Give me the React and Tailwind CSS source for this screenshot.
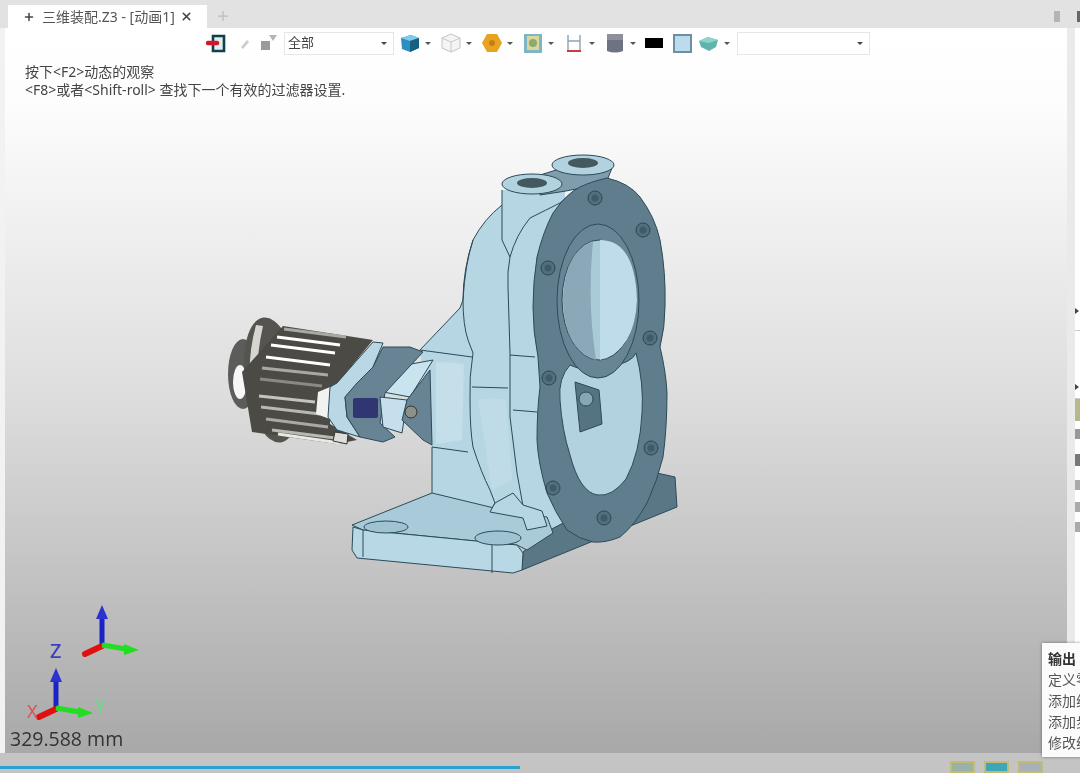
import { Plus, X } from "lucide-react";

const cjk = "font-['Noto_Sans','Noto_Sans_CJK_SC',sans-serif]";

function Caret({ last }) {
  return (
    <span
      className={`ml-[4px] h-0 w-0 border-x-[3px] border-t-[3px] border-x-transparent border-t-[#555] ${last ? "mr-[7px]" : "mr-[9px]"}`}
    />
  );
}

function Combo({ label, width }) {
  return (
    <div className={`${width} flex h-[23px] items-center justify-between border border-[#e6e6e6] bg-white pl-[3px] pr-[6px] text-[13px] text-[#444]`}>
      <span>{label}</span>
      <span className="h-0 w-0 border-x-[3px] border-t-[3px] border-x-transparent border-t-[#444]" />
    </div>
  );
}

function Icon({ children, w = 22 }) {
  return (
    <svg width={w} height="22" viewBox="0 0 22 22" className="shrink-0">
      {children}
    </svg>
  );
}

function Toolbar() {
  return (
    <div className="flex h-[30px] items-center pl-[201px]">
      <Icon>
        <path d="M7 4h11v15H7z" fill="#dfeef0" stroke="#123f4c" strokeWidth="2.6" />
        <path d="M2 11h9" stroke="#d8142a" strokeWidth="4.5" strokeLinecap="round" />
      </Icon>
      <span className="w-[5px]" />
      <Icon>
        <path d="M8 15l6-7 2 2-6 7z" fill="#ccc" />
      </Icon>
      <span className="w-[2px]" />
      <Icon>
        <rect x="4" y="9" width="9" height="9" fill="#9a9a9a" />
        <path d="M12 3h8l-4 6z" fill="#b5b5b5" />
      </Icon>
      <span className="w-[5px]" />
      <Combo label="全部" width="w-[110px]" />
      <span className="w-[5px]" />
      <Icon>
        <path d="M2 6l10-3 8 3v10l-9 4-8-3z" fill="#2b8fc0" />
        <path d="M2 6l9 3 9-3-8-3z" fill="#7ecbea" />
        <path d="M11 9v11l9-4V6z" fill="#17607f" />
      </Icon>
      <Caret />
      <Icon>
        <path d="M2 6l9-4 9 4v10l-9 4-9-4z" fill="#f4f4f4" stroke="#c4c4c4" />
        <path d="M2 6l9 4 9-4M11 10v10" fill="none" stroke="#c8c8c8" />
      </Icon>
      <Caret />
      <Icon>
        <path d="M6 2h10l5 9-5 9H6l-5-9z" fill="#e8a320" />
        <circle cx="11" cy="11" r="3" fill="#c77d12" />
      </Icon>
      <Caret />
      <Icon>
        <rect x="2" y="2" width="18" height="19" fill="#7fb6c4" />
        <rect x="5" y="4" width="12" height="14" fill="#d9d6a0" />
        <circle cx="11" cy="11" r="4" fill="#8cab6a" />
      </Icon>
      <Caret />
      <Icon>
        <path d="M5 3v15M17 3v15M5 9h12" fill="none" stroke="#8aa4b4" strokeWidth="1.4" />
        <path d="M4 19h14" stroke="#c83a4a" strokeWidth="2" />
      </Icon>
      <Caret />
      <Icon>
        <path d="M3 2h16v17q-8 3-16 0z" fill="#6d7382" />
        <path d="M3 2h16v6H3z" fill="#8d909a" />
      </Icon>
      <Caret />
      <span className="h-[10px] w-[18px] bg-black" />
      <span className="w-[10px]" />
      <span className="h-[19px] w-[19px] border-2 border-[#6f8fa0] bg-[#bcdcee]" />
      <span className="w-[6px]" />
      <Icon>
        <path d="M1 9l9-4 10 3-2 7-7 4-8-4z" fill="#5fb5ac" />
        <path d="M1 9l9-4 10 3-9 3z" fill="#8ed4cc" />
      </Icon>
      <Caret last />
      <Combo label="" width="w-[133px]" />
    </div>
  );
}

function Bolt({ cx, cy }) {
  return (
    <g>
      <circle cx={cx} cy={cy} r="7" fill="#51707f" stroke="#2c4652" strokeWidth="1" />
      <circle cx={cx} cy={cy} r="3.5" fill="#3f5a68" />
    </g>
  );
}

const ink = "#2c4a58";
const teeth = [
  [284, 329, 346, 337, "#a9a9a4"],
  [277, 337, 340, 345, "#ffffff"],
  [271, 345, 335, 353, "#ffffff"],
  [266, 357, 330, 365, "#ffffff"],
  [262, 368, 328, 375, "#a9a9a4"],
  [260, 379, 322, 386, "#8a8a85"],
  [259, 396, 315, 402, "#c4c4be"],
  [261, 407, 320, 414, "#b9b9b3"],
  [266, 419, 328, 427, "#a9a9a4"],
  [272, 430, 335, 438, "#b9b9b3"],
  [278, 434, 340, 443, "#e8e8e4"],
];
const bolts = [
  [595, 198],
  [643, 230],
  [548, 268],
  [650, 338],
  [549, 378],
  [651, 448],
  [553, 488],
  [604, 518],
];

function Model() {
  return (
    <svg width="500" height="460" viewBox="200 130 500 460" className="absolute left-[195px] top-[102px]">
      {/* nut */}
      <ellipse cx="243" cy="374" rx="15" ry="35" fill="#5c5c5a" />
      <ellipse cx="240" cy="382" rx="7" ry="17" fill="#f7f7f7" />
      {/* pulley disc */}
      <ellipse cx="272" cy="380" rx="27" ry="63" transform="rotate(-8 272 380)" fill="#55544f" />
      <path d="M256 325q-15 55 5 110l5 3q-16-55-3-112z" fill="#d5d5d2" />
      {/* gear */}
      <path d="M283 326l90 14-36 44-7 4v36l27 16-20 4-85-12-10-60z" fill="#4b4a45" />
      {teeth.map(([x1, y1, x2, y2, c], i) => (
        <line key={i} x1={x1} y1={y1} x2={x2} y2={y2} stroke={c} strokeWidth="3" />
      ))}
      <path d="M318 392l12-5v32l-14-5z" fill="#f2f2f0" />
      <path d="M335 432l13 2-1 10-14-3z" fill="#ddd" stroke="#333" strokeWidth="1" />
      {/* housing */}
      <path
        d="M502 190L565 190L565 530L490 512L432 493V447L420 350L460 308L463 300Q465 260 473 240Q485 218 502 205Z"
        fill="#b6d6e4"
      />
      <path d="M502 205q-18 14-29 35-8 24-10 60l-3 8-40 42" fill="none" stroke={ink} strokeWidth="1" />
      <path d="M473 240q-10 30-10 60 0 25 5 40l5 13q-4 24-3 47 0 30 3 47 8 25 17 43l5 13-5 9 33 6 4 12" fill="none" stroke={ink} strokeWidth="1" />
      <path d="M502 190v50l8 17q-3 15-2 30l2 66v64l7 56 8 44" fill="none" stroke={ink} strokeWidth="1" />
      <path d="M510 257q6-22 20-39 16-8 30-15l30-25" fill="none" stroke={ink} strokeWidth="1" />
      <path d="M420 350l52 7M472 387l36 1M510 355l25 2M513 410l24 2M432 447l36 5M432 447v46" fill="none" stroke={ink} strokeWidth="1" />
      <path d="M436 362q15 0 28 2l-2 76-26 4z" fill="#c4deea" />
      <path d="M478 400q14-3 28 0l6 80-20 10z" fill="#bfdbe8" />
      {/* coupling */}
      <path d="M395 367l38-7-23 37-27-5z" fill="#c9e3ef" stroke={ink} strokeWidth="1" />
      <path d="M373 342l10 1-10 24-28 30 2 20 13 20-23-7-9-13 2-30 7-4z" fill="#b9d7e5" stroke={ink} strokeWidth="1" />
      <path d="M383 347h27l13 5-38 41-5 30 15 14-12 5-23-5-13-20-2-20 12-14 16-16z" fill="#688494" stroke={ink} strokeWidth="1" />
      <path d="M380 397l27 3-5 33-19-6z" fill="#c5e0ec" stroke={ink} strokeWidth="1" />
      <path d="M430 370l-23 30-5 20 21 20 9 5z" fill="#688494" stroke={ink} strokeWidth="1" />
      <circle cx="411" cy="412" r="6" fill="#8d9088" stroke="#333" />
      <rect x="353" y="398" width="25" height="20" rx="2" fill="#2f3672" />
      {/* base */}
      <path d="M522 570l155-63-2-30-18-4-107 57-27 22z" fill="#597785" stroke={ink} strokeWidth="1" />
      <path d="M352 525l80-32 58 14 35 8 22 2 6 16-26 17-10-5-154-15z" fill="#a9cbd9" stroke={ink} strokeWidth="1" />
      <path d="M495 503l-5 9 33 6 4 12 20-4-5-15-19-6-10-12z" fill="#b6d6e4" stroke={ink} strokeWidth="1" />
      <path d="M353 527l10 3 154 15 6 8-1 17-9 3-156-15-5-8z" fill="#b9d8e6" stroke={ink} strokeWidth="1" />
      <path d="M363 530v27M492 545v28" stroke={ink} strokeWidth="1" />
      <ellipse cx="386" cy="527" rx="22" ry="6" fill="#a0c3d2" stroke={ink} />
      <ellipse cx="498" cy="538" rx="23" ry="7" fill="#a0c3d2" stroke={ink} />
      {/* bosses */}
      <path d="M540 175l42-13 30 6-6 15-40 8-26 4z" fill="#7f9dac" stroke={ink} />
      <ellipse cx="583" cy="165" rx="31" ry="10" fill="#b3d2e0" stroke={ink} />
      <ellipse cx="583" cy="163" rx="15" ry="5" fill="#44585f" />
      <ellipse cx="532" cy="184" rx="30" ry="10" fill="#b3d2e0" stroke={ink} />
      <ellipse cx="532" cy="183" rx="15" ry="5" fill="#44585f" />
      {/* flange */}
      <path
        d="M607 178q22 5 33 19 15 20 20 43 6 32 5 67 0 20-5 40 6 25 7 46 0 35-4 64-6 25-16 46-12 22-27 34-14 6-27 5-14-3-26-12-12-18-20-37-9-30-10-53 0-30 3-53l-2-30q-5-25-5-50 0-25 4-50 6-25 16-44 14-20 27-26 10-5 27-9z"
        fill="#5f7d8d"
        stroke={ink}
        strokeWidth="1"
      />
      <path d="M560 400q-2-22 10-35 20 10 38 2 24-4 28-14 8 30 6 60-2 40-16 66-14 18-28 16-18-2-28-40-8-25-10-55z" fill="#b3d2e0" stroke={ink} />
      <ellipse cx="598" cy="301" rx="41" ry="77" fill="#688595" stroke={ink} />
      <ellipse cx="599" cy="300" rx="37" ry="60" fill="#a9cbd9" stroke={ink} />
      <path d="M600 240q35 0 37 60-2 50-37 60z" fill="#bfdcea" />
      <path d="M563 300q2-50 30-58-6 60 3 118-32-10-33-60z" fill="#8aa8b7" />
      <path d="M575 382l24 8 3 34-22 8z" fill="#567381" stroke={ink} />
      <circle cx="586" cy="399" r="7" fill="#87a7b5" stroke={ink} />
      {bolts.map(([cx, cy]) => (
        <Bolt key={cx + cy} cx={cx} cy={cy} />
      ))}
    </svg>
  );
}

function Triad({ className }) {
  return (
    <svg width="72" height="72" viewBox="0 0 72 72" className={className}>
      <path d="M22 44V12" stroke="#1a22c8" strokeWidth="5" />
      <path d="M22 3l-6 14h12z" fill="#2a32d0" />
      <path d="M22 44L5 52" stroke="#e01010" strokeWidth="6" strokeLinecap="round" />
      <path d="M22 43l24 4" stroke="#22dd22" strokeWidth="5" />
      <path d="M44 42l15 6-15 5z" fill="#22dd22" />
    </svg>
  );
}

function DockArrow() {
  return <span className="mt-[3px] block h-0 w-0 border-y-[3px] border-l-[4px] border-y-transparent border-l-[#444]" />;
}

export default function App() {
  return (
    <div className={`${cjk} relative h-[773px] w-[1080px] overflow-hidden bg-[#e2e2e2] blur-[0.5px]`}>
      {/* tabs */}
      <div className="flex h-[28px] items-end pl-[8px] pt-[5px]">
        <div className="flex h-[23px] w-[199px] items-center bg-white pl-[15px] text-[14px] text-[#555]">
          <Plus size={12} strokeWidth={3} className="text-[#444]" />
          <span className="ml-[7px] whitespace-nowrap">三维装配.Z3 - [动画1]</span>
          <X size={13} strokeWidth={3} className="ml-[5px] text-[#444]" />
        </div>
        <Plus size={14} strokeWidth={3} className="mb-[5px] ml-[9px] text-[#c4c4c4]" />
        <div className="mb-[6px] ml-auto mr-[17px] h-[11px] w-[6px] bg-[#b4b4b4]" />
        <div className="mb-[6px] h-[11px] w-[3px] bg-[#666]" />
      </div>

      <div className="flex h-[725px]">
        <div className="w-[5px] bg-[#f2f2f2]" />
        {/* viewport */}
        <div className="relative flex w-[1062px] flex-col bg-[linear-gradient(180deg,#ffffff_0%,#fdfdfd_10%,#dedede_50%,#a8a8a8_100%)]">
          <Toolbar />
          <div className="pl-[20px] pt-[5px] text-[14px] leading-[18px] text-[#444]">
            <p>按下&lt;F2&gt;动态的观察</p>
            <p>&lt;F8&gt;或者&lt;Shift-roll&gt; 查找下一个有效的过滤器设置.</p>
          </div>
          <Model />
          <Triad className="absolute left-[75px] top-[574px]" />
          <Triad className="absolute left-[29px] top-[637px]" />
          <span className="absolute left-[45px] top-[613px] text-[20px] font-medium leading-none text-[#3a3fc0]">Z</span>
          <span className="absolute left-[22px] top-[674px] text-[18px] leading-none text-[#e05050]">X</span>
          <span className="absolute left-[90px] top-[669px] text-[18px] leading-none text-[#66dd88]">Y</span>
          <span className="absolute bottom-[5px] left-[5px] font-['Open_Sans',sans-serif] text-[19.5px] leading-none text-[#333]">
            329.588 mm
          </span>
        </div>
        {/* right dock */}
        <div className="flex w-[13px] bg-[#eaeaea]">
          <div className="ml-[8px] flex flex-1 flex-col bg-white">
            <div className="mt-[277px] h-[26px] border-b border-[#ccc]">
              <DockArrow />
            </div>
            <div className="mt-[44px] h-[24px] border-b border-[#ccc] pt-[6px]">
              <DockArrow />
            </div>
            <div className="h-[22px] bg-[#b9b78e]" />
            <div className="mt-[8px] h-[10px] bg-[#999]" />
            <div className="mt-[15px] h-[12px] bg-[#777]" />
            <div className="mt-[14px] h-[10px] bg-[#aaa]" />
            <div className="mt-[12px] h-[10px] bg-[#aaa]" />
            <div className="mt-[10px] h-[10px] bg-[#aaa]" />
          </div>
        </div>
      </div>

      {/* bottom strip */}
      <div className="absolute inset-x-0 bottom-0 h-[20px] bg-[#c4c4c4]">
        <div className="absolute left-0 top-[13px] h-[3px] w-[520px] bg-[#2b9fd0]" />
        <div className="absolute left-[950px] top-[8px] flex gap-[9px]">
          <span className="h-[12px] w-[25px] border-2 border-[#c2bb70] bg-[#9ab0a8]" />
          <span className="h-[12px] w-[25px] border-2 border-[#c2bb70] bg-[#3fa5b8]" />
          <span className="h-[12px] w-[25px] border-2 border-[#c2bb70] bg-[#a8b0b8]" />
        </div>
      </div>

      {/* popup */}
      <div className="absolute left-[1042px] top-[643px] h-[114px] w-[60px] bg-[#fbfbfb] pl-[6px] pt-[5px] text-[14px] leading-[21px] text-[#555] shadow-[0_0_3px_rgba(0,0,0,0.4)]">
        <p className="font-bold text-[#333]">输出</p>
        <p className="whitespace-nowrap">定义零件</p>
        <p className="whitespace-nowrap">添加组件</p>
        <p className="whitespace-nowrap">添加步骤</p>
        <p className="whitespace-nowrap">修改组件</p>
      </div>
    </div>
  );
}
